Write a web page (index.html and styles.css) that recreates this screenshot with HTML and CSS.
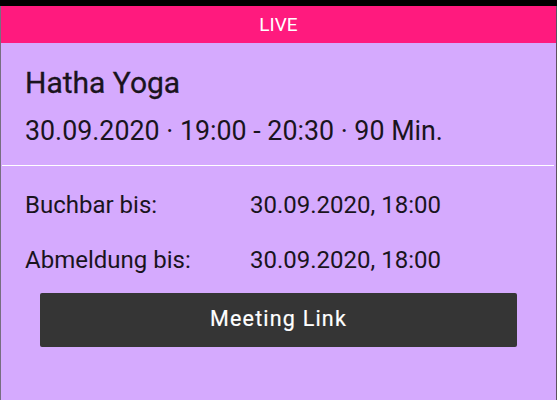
FILE: index.html
```html
<!DOCTYPE html>
<html lang="de">
<head>
<meta charset="utf-8">
<title>Hatha Yoga</title>
<link rel="stylesheet" href="styles.css">
</head>
<body>
<div class="screen">
  <div class="card">
    <div class="live">LIVE</div>
    <div class="head">
      <div class="title">Hatha Yoga</div>
      <div class="meta">30.09.2020 · 19:00 - 20:30 · 90 Min.</div>
    </div>
    <div class="divider"></div>
    <div class="rows">
      <div class="label">Buchbar bis:</div>
      <div class="value">30.09.2020, 18:00</div>
      <div class="label">Abmeldung bis:</div>
      <div class="value">30.09.2020, 18:00</div>
    </div>
    <div class="button">Meeting Link</div>
  </div>
</div>
</body>
</html>
```

FILE: styles.css
```css
html, body {
  margin: 0;
  padding: 0;
  height: 100%;
}
body {
  background: #000;
  font-family: Roboto, "Liberation Sans", sans-serif;
  color: #1a141d;
}
.screen {
  padding-top: 6px;
  height: 100%;
  box-sizing: border-box;
}
.card {
  height: 100%;
  background: #d5aafe;
  border-left: 1px solid #776e80;
  border-right: 1px solid #5d5060;
}
.live {
  height: 37px;
  line-height: 37px;
  background: #ff1a7e;
  color: #fff;
  text-align: center;
  font-size: 19px;
}
.head {
  padding: 23px 24px 0;
}
.title {
  font-size: 30px;
  line-height: 34px;
  font-weight: 400;
  -webkit-text-stroke: 0.3px #1a141d;
}
.meta {
  margin-top: 15px;
  font-size: 26.8px;
  line-height: 32px;
}
.divider {
  margin: 18px 2px 0 1px;
  height: 1px;
  background: #fff;
}
.rows {
  padding: 12px 24px 0;
  display: grid;
  grid-template-columns: 225px auto;
  font-size: 24px;
  line-height: 55px;
}
.button {
  margin: 5px 39px 0;
  height: 54px;
  line-height: 52px;
  background: #353535;
  border-radius: 2px;
  color: #fff;
  text-align: center;
  font-size: 21.5px;
  letter-spacing: 1.2px;
  -webkit-text-stroke: 0.2px #fff;
}
```
